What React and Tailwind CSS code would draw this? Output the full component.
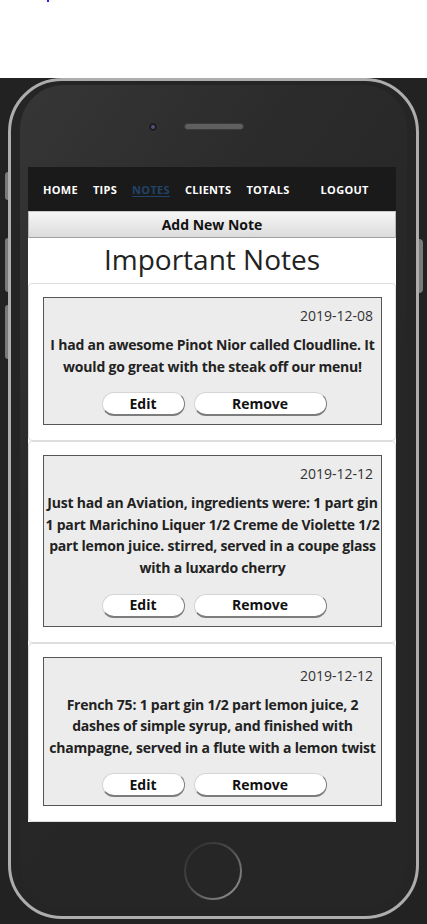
import React from "react";

const notes = [
  {
    date: "2019-12-08",
    lines: [
      "I had an awesome Pinot Nior called Cloudline. It",
      "would go great with the steak off our menu!",
    ],
  },
  {
    date: "2019-12-12",
    lines: [
      "Just had an Aviation, ingredients were: 1 part gin",
      "1 part Marichino Liquer 1/2 Creme de Violette 1/2",
      "part lemon juice. stirred, served in a coupe glass",
      "with a luxardo cherry",
    ],
  },
  {
    date: "2019-12-12",
    lines: [
      "French 75: 1 part gin 1/2 part lemon juice, 2",
      "dashes of simple syrup, and finished with",
      "champagne, served in a flute with a lemon twist",
    ],
  },
];

const navItems = ["HOME", "TIPS", "NOTES", "CLIENTS", "TOTALS"];

const PillButton = ({ label, width }) => (
  <button
    className={`${width} h-[24px] rounded-full bg-white border border-t-[#d4d4d4] border-l-[#d4d4d4] border-r-[#7c7c7c] border-b-[#7c7c7c] border-b-2 text-[14px] font-bold text-[#111] leading-none`}
  >
    {label}
  </button>
);

const NoteCard = ({ note }) => (
  <div className="border border-[#dedede] rounded-[4px] bg-white pt-[13px] pb-[15px] pl-[14px] pr-[13px]">
    <div className="border border-[#555] bg-[#ececec] pt-[8px] pb-[8px]">
      <div className="text-right pr-[8px] text-[14px] leading-[20px] text-[#333]">{note.date}</div>
      <div className="mt-[8px] flex flex-col items-center text-[14px] leading-[21.6px] font-bold text-[#222] tracking-[-0.2px]">
        {note.lines.map((line) => (
          <span key={line} className="whitespace-nowrap">
            {line}
          </span>
        ))}
      </div>
      <div className="mt-[15px] flex justify-center gap-[9px] pl-[3px]">
        <PillButton label="Edit" width="w-[83px]" />
        <PillButton label="Remove" width="w-[133px]" />
      </div>
    </div>
  </div>
);

export default function App() {
  return (
    <div className="min-h-screen bg-white font-['Open_Sans',sans-serif]">
      <div className="h-[78px] relative">
        <span className="absolute left-[47px] top-0 w-[2px] h-[2px] bg-[#2222ee]" />
      </div>

      <div className="bg-[#222222] px-[8px] pb-[6px]">
        <div className="relative rounded-[54px] border-[3px] border-[#adadad] bg-[#252525]">
          {/* side buttons */}
          <span className="absolute -left-[6px] top-[91px] w-[3px] h-[28px] rounded-l-sm bg-[#7a7a7a]" />
          <span className="absolute -left-[6px] top-[157px] w-[3px] h-[54px] rounded-l-sm bg-[#7a7a7a]" />
          <span className="absolute -left-[6px] top-[224px] w-[3px] h-[54px] rounded-l-sm bg-[#7a7a7a]" />
          <span className="absolute -right-[7px] top-[158px] w-[4px] h-[54px] rounded-r-sm bg-[#7a7a7a]" />

          <div className="mx-[9px] mt-[4px] mb-[8px] rounded-[44px] bg-[linear-gradient(125deg,#363636_0%,#2b2b2b_30%,#262626_60%,#262626_100%)] pl-[8px] pr-[11px]">
            {/* earpiece */}
            <div className="h-[82px] flex items-center pl-[120px] pt-[1px]">
              <div className="w-[10px] h-[10px] rounded-full bg-[#1c1c1c] border border-[#383838] flex items-center justify-center">
                <div className="w-[4px] h-[4px] rounded-full bg-[#5a4b80]" />
              </div>
              <div className="ml-[26px] w-[60px] h-[7px] rounded-full border border-[#3a3a3a] bg-[#484848] bg-[radial-gradient(#6c6c6c_0.6px,transparent_0.9px)] bg-[length:2px_2px]" />
            </div>

            {/* screen */}
            <div className="w-[368px] bg-white">
              <nav className="h-[44px] bg-[#1a1a1a] flex items-center pl-[15px] pt-[2px] text-[11px] tracking-[0.3px] font-bold text-white">
                {navItems.map((item) => (
                  <span
                    key={item}
                    className={
                      item === "NOTES"
                        ? "mr-[15px] text-[#22436a] underline underline-offset-2"
                        : "mr-[15px]"
                    }
                  >
                    {item}
                  </span>
                ))}
                <span className="ml-[16px]">LOGOUT</span>
              </nav>

              <button className="w-full h-[27px] border border-t-[#c8c8c8] border-b-[#a0a0a0] border-x-[#b8b8b8] bg-[linear-gradient(#f6f6f6,#dcdcdc)] text-[14px] font-bold text-[#111]">
                Add New Note
              </button>

              <h1 className="h-[45px] flex items-center justify-center text-[28px] text-[#222] pb-[4px]">
                Important Notes
              </h1>

              {notes.map((note, i) => (
                <NoteCard key={i} note={note} />
              ))}
            </div>

            {/* home button */}
            <div className="h-[86px] flex items-center justify-center">
              <svg width="60" height="60" viewBox="0 0 60 60" className="ml-[2px] mt-[12px]">
                <defs>
                  <linearGradient id="hb" x1="0" y1="0" x2="1" y2="1">
                    <stop offset="0%" stopColor="#2a2a2a" />
                    <stop offset="45%" stopColor="#4a4a4a" />
                    <stop offset="100%" stopColor="#9a9a9a" />
                  </linearGradient>
                </defs>
                <circle cx="30" cy="30" r="28" fill="none" stroke="url(#hb)" strokeWidth="2" />
              </svg>
            </div>
          </div>
        </div>
      </div>
    </div>
  );
}
